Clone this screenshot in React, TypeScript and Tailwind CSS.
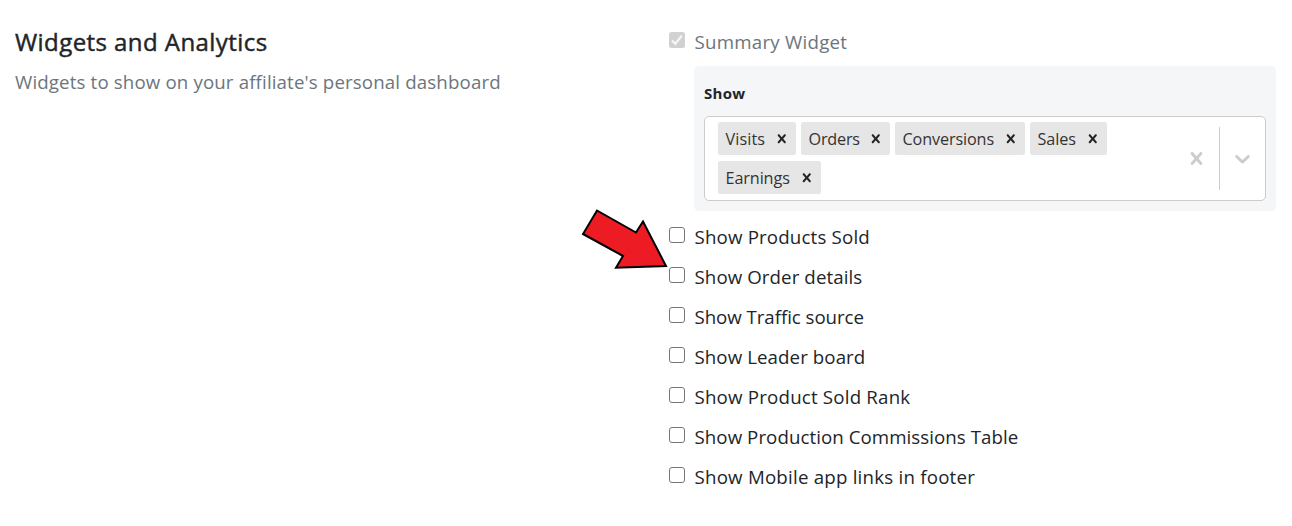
import { useState } from "react";

const CROSS =
  "M14.348 14.849c-0.469 0.469-1.229 0.469-1.697 0l-2.651-3.030-2.651 3.029c-0.469 0.469-1.229 0.469-1.697 0-0.469-0.469-0.469-1.229 0-1.697l2.758-3.15-2.759-3.152c-0.469-0.469-0.469-1.228 0-1.697s1.228-0.469 1.697 0l2.652 3.031 2.651-3.031c0.469-0.469 1.228-0.469 1.697 0s0.469 1.229 0 1.697l-2.758 3.152 2.758 3.15c0.469 0.469 0.469 1.229 0 1.698z";
const CHEVRON =
  "M4.516 7.548c0.436-0.446 1.043-0.481 1.576 0l3.908 3.747 3.908-3.747c0.533-0.481 1.141-0.446 1.574 0 0.436 0.445 0.408 1.197 0 1.615-0.406 0.418-4.695 4.502-4.695 4.502-0.217 0.223-0.502 0.335-0.787 0.335s-0.57-0.112-0.789-0.335c0 0-4.287-4.084-4.695-4.502s-0.436-1.17 0-1.615z";

function Glyph({ d, className }: { d: string; className: string }) {
  return (
    <svg viewBox="0 0 20 20" className={className} fill="currentColor" aria-hidden="true">
      <path d={d} />
    </svg>
  );
}

const tags = [
  { label: "Visits", width: "w-[78px]", text: "tracking-[0.1px]" },
  { label: "Orders", width: "w-[89px]", text: "tracking-[-0.2px]" },
  { label: "Conversions", width: "w-[130px]", text: "tracking-[-0.12px]" },
  { label: "Sales", width: "w-[77px]", text: "tracking-[-0.1px]" },
  { label: "Earnings", width: "w-[103px]", text: "tracking-[-0.1px]" },
];

const options = [
  { label: "Show Products Sold", text: "tracking-[0.17px]" },
  { label: "Show Order details", text: "tracking-[0.09px]" },
  { label: "Show Traffic source", text: "tracking-[-0.05px]" },
  { label: "Show Leader board", text: "tracking-[0.08px]" },
  { label: "Show Product Sold Rank", text: "tracking-[0.2px]" },
  { label: "Show Production Commissions Table", text: "tracking-[0.06px]" },
  { label: "Show Mobile app links in footer", text: "tracking-[0.22px]" },
];

function Option({ label, text }: { label: string; text: string }) {
  const [checked, setChecked] = useState(false);
  return (
    <label className="flex h-10 items-start gap-[9.5px]">
      <input
        type="checkbox"
        checked={checked}
        onChange={() => setChecked(!checked)}
        className="mt-[6px] size-4 shrink-0 appearance-none rounded-[3px] border border-[#767676] bg-white checked:bg-[#0075ff]"
      />
      <span className={`mt-px whitespace-nowrap text-[18.7px] leading-[30px] ${text}`}>{label}</span>
    </label>
  );
}

export default function App() {
  return (
    <main className="relative flex h-[526px] w-[1292px] overflow-hidden bg-white font-['Open_Sans',sans-serif] text-[#212529]">
      <section className="w-[669px] shrink-0 pl-[15px] pt-[27px]">
        <h2 className="text-[24px] font-medium leading-[30px] tracking-[0.43px] [-webkit-text-stroke:0.45px_#212529]">
          <span>Widgets and Analytics</span>
        </h2>
        <p className="mt-[10px] text-[18.7px] leading-[30px] tracking-[0.14px] text-[#6c757d]">
          <span>Widgets to show on your affiliate's personal dashboard</span>
        </p>
      </section>

      <section className="w-[607px] pt-[26px]">
        <div className="flex h-10 items-start gap-[9.5px]">
          <span className="mt-[6px] flex size-4 items-center justify-center rounded-[2.5px] bg-[#d1d1d1]">
            <svg viewBox="0 0 16 16" className="size-4" fill="none" stroke="#f6f6f6" strokeWidth="2.2" aria-hidden="true">
              <path d="M3 8.6 6.3 11.8 12.8 3.6" />
            </svg>
          </span>
          <span className="mt-px text-[18.7px] leading-[30px] tracking-[0.25px] text-[#6c757d]">Summary Widget</span>
        </div>

        <div className="ml-[25px] h-[145px] rounded-[5px] bg-[#f5f6f8] px-[10px] pt-[15px]">
          <h3 className="h-[35px] text-[15px] font-bold leading-6 tracking-[0.3px]">
            <span>Show</span>
          </h3>
          <div className="flex h-[85px] items-center rounded-[5px] border border-[#cccccc] bg-white">
            <div className="flex h-full w-[420px] flex-wrap content-start gap-x-[5px] gap-y-[6px] pl-[13px] pt-[5px]">
              {tags.map((tag) => (
                <span
                  key={tag.label}
                  className={`flex h-[33px] items-center justify-between rounded-[2.5px] bg-[#e6e6e6] pl-[7.5px] pr-[5.25px] ${tag.width}`}
                >
                  <span className={`mt-px text-[16.2px] leading-[33px] text-[#333333] ${tag.text}`}>{tag.label}</span>
                  <Glyph d={CROSS} className="size-[17.5px]" />
                </span>
              ))}
            </div>
            <Glyph d={CROSS} className="ml-[59px] size-[25px] text-[#cccccc]" />
            <span className="ml-[10px] h-[63px] w-px bg-[#cccccc]" />
            <Glyph d={CHEVRON} className="ml-[10px] size-[25px] text-[#cccccc]" />
          </div>
        </div>

        <div className="pt-[10px]">
          {options.map((option) => (
            <Option key={option.label} {...option} />
          ))}
        </div>
      </section>

      <svg viewBox="0 0 92 66" className="absolute left-[579px] top-[206px] h-[66px] w-[92px]" aria-hidden="true">
        <path d="M18 4.5 57 26.5 64 15.5 87 60 37 61.8 44 50 4 28Z" fill="#ed1c24" stroke="#000" strokeWidth="2" />
      </svg>
    </main>
  );
}
